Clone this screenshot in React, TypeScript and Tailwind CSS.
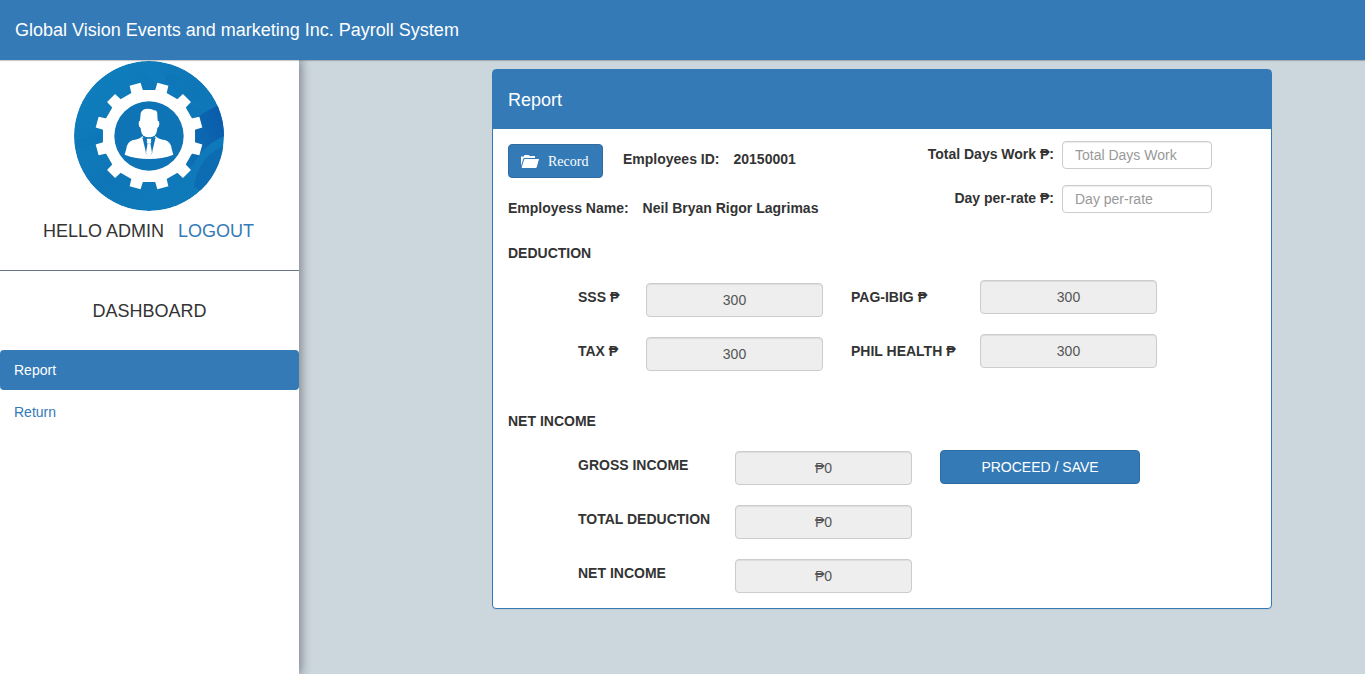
import React from 'react'

const teeth = [15, 45, 75, 105, 135, 165, 195, 225, 255, 285, 315, 345]

const ringPoints = teeth
  .map((deg) => {
    const a = (deg * Math.PI) / 180
    return `${(143 * Math.sin(a)).toFixed(1)},${(-143 * Math.cos(a)).toFixed(1)}`
  })
  .join(' ')

function Avatar() {
  return (
    <svg viewBox="-225 -225 450 450" className="size-[150px]" role="img" aria-label="Admin">
      <defs>
        <linearGradient id="disc" x1="0" y1="0" x2="1" y2="1">
          <stop offset="0" stopColor="#0f80bf" />
          <stop offset="0.5" stopColor="#0e76b7" />
          <stop offset="1" stopColor="#0f7cbb" />
        </linearGradient>
        <linearGradient id="sweep" x1="0" y1="0.7" x2="1" y2="0.3">
          <stop offset="0" stopColor="#0b66b0" stopOpacity="0" />
          <stop offset="1" stopColor="#0b5cab" />
        </linearGradient>
        <clipPath id="round">
          <circle r="225" />
        </clipPath>
      </defs>
      <g clipPath="url(#round)">
        <circle r="225" fill="url(#disc)" />
        <path d="M0 90 Q100 -50 225 -100 V0 Q160 30 130 90 Q60 140 0 90Z" fill="url(#sweep)" />
        <path d="M135 150 Q150 60 225 30 V130 L170 175Z" fill="#0c69b0" opacity="0.8" />
        <path d="M-225 15 Q-60 -20 60 -190 L90 -175 Q-40 0 -225 40Z" fill="#0a6fb4" opacity="0.25" />
        <path d="M20 -225 Q70 -120 160 -90 L170 -80 Q60 -100 -20 -200Z" fill="#2089c8" opacity="0.15" />
      </g>
      <g fill="#fff">
        <polygon points={ringPoints} />
        {teeth.map((deg) => (
          <path key={deg} d="M-18 -130 L-17 -161 H17 L18 -130Z" transform={`rotate(${deg})`} />
        ))}
      </g>
      <circle r="104" fill="#0f74b5" />
      <g fill="#fff">
        <path d="M-25 -68 Q-22 -82 -3 -82 Q10 -82 15 -77 Q26 -78 25 -62 L26 -46 Q31 -46 31 -39 Q31 -27 25 -24 Q24 -8 17 -1 Q0 9 -17 -1 Q-24 -8 -25 -24 Q-31 -27 -31 -39 Q-31 -46 -27 -46Z" />
        <path d="M-20 0 L-10 14 Q0 20 10 14 L20 0 Q24 8 50 13 Q65 18 68 38 L73 56 Q40 69 0 69 Q-40 69 -73 56 L-68 38 Q-65 18 -50 13 Q-24 8 -20 0Z" />
      </g>
      <path d="M-20 4 L-8 54 L-5 26 L-8 10 L0 6 L8 10 L5 26 L8 54 L20 4 L0 10Z" fill="#0f74b5" />
      <path d="M-10 50 L-5 22 H5 L10 50 L0 62Z" fill="#0f74b5" />
      <path d="M-4 22 H4 L9 50 L0 66 L-9 50Z M-7 8 H7 L4 20 H-4Z" fill="#fff" />
    </svg>
  )
}

function FolderOpen() {
  return (
    <svg viewBox="0 0 18 13" className="h-[13px] w-[18px]" fill="currentColor" aria-hidden="true">
      <path d="M0 11 V1.500 H3 V1 Q3 0 4 0 H7.500 Q8.500 0 8.500 1 H14 V3 H3.500 Q2.500 3 2.200 4Z" />
      <path d="M4 4 H18 L15.800 12 Q15.500 13 14.500 13 H1 Q0.600 13 0.800 12 L3 4.800 Q3.200 4 4 4Z" />
    </svg>
  )
}

const inputBase =
  'min-w-0 rounded border border-[#ccc] px-3 text-sm leading-5 shadow-[inset_0_1px_1px_rgba(0,0,0,0.075)] outline-none focus:border-[#66afe9]'

type FieldProps = { id: string; label: string; value: string; labelClass?: string }

function Field({ id, label, value, labelClass = 'mt-1' }: FieldProps) {
  return (
    <>
      <label htmlFor={id} className={`self-start font-bold ${labelClass}`}>
        {label}
      </label>
      <input
        id={id}
        readOnly
        value={value}
        className={`${inputBase} h-[34px] w-full bg-[#eee] text-center text-[#555]`}
      />
    </>
  )
}

function RateField({ id, label }: { id: string; label: string }) {
  return (
    <>
      <label htmlFor={id} className="mt-[3px] self-start text-right font-bold">
        {label}
      </label>
      <input
        id={id}
        placeholder={label.replace(' ₱:', '')}
        className={`${inputBase} h-7 w-full bg-white text-[#555] placeholder:text-[#999]`}
      />
    </>
  )
}

export default function App() {
  return (
    <div className="flex min-h-[calc(100vh-2px)] flex-col overflow-hidden bg-[#ccd6dd] font-['Liberation_Sans',Arial,sans-serif] text-sm leading-5 text-[#333]">
      <header className="z-10 flex h-[60px] items-center bg-[#337ab7] px-[15px] shadow-[0_1px_1px_rgba(0,0,0,0.2)]">
        <h1 className="text-lg leading-5 text-white">
          Global Vision Events and marketing Inc. Payroll System
        </h1>
      </header>
      <div className="flex flex-1">
        <aside className="w-[299px] shrink-0 bg-white shadow-[1px_0_10px_1px_rgba(0,0,0,0.4)]">
          <div className="flex h-[211px] flex-col items-center border-b border-[#657786] pt-px pr-0.5">
            <Avatar />
            <p className="mt-[10px] flex gap-[14px] text-lg leading-5">
              <span>HELLO ADMIN</span>
              <a href="#logout" className="text-[#337ab7]">
                LOGOUT
              </a>
            </p>
          </div>
          <h2 className="pt-[30px] pb-[29px] text-center text-lg leading-5">DASHBOARD</h2>
          <nav className="flex flex-col gap-0.5 text-[#337ab7]">
            <a href="#report" className="rounded bg-[#337ab7] px-[14px] py-[10px] text-white">
              Report
            </a>
            <a href="#return" className="rounded px-[14px] py-[10px]">
              Return
            </a>
          </nav>
        </aside>
        <main className="min-w-0 flex-1 pt-[9px] pr-[93px] pl-[193px]">
          <section className="rounded border border-[#337ab7] bg-white shadow-[0_1px_1px_rgba(0,0,0,0.05)]">
            <h2 className="bg-[#337ab7] px-[15px] pt-5 pb-[19px] text-lg leading-5 text-white">Report</h2>
            <form className="px-[15px] pt-3 pb-[15px]" onSubmit={(e) => e.preventDefault()}>
              <div className="flex justify-between">
                <div className="pt-[3px]">
                  <div className="flex items-start gap-5">
                    <button
                      type="button"
                      className="flex h-[34px] w-[95px] items-center gap-[9px] rounded border border-[#2e6da4] bg-[#337ab7] px-3 font-['Liberation_Serif',serif] text-white"
                    >
                      <FolderOpen />
                      <span className="pt-0.5">Record</span>
                    </button>
                    <p className="flex gap-[14px] pt-[5px] font-bold">
                      <span>Employees ID:</span>
                      <span>20150001</span>
                    </p>
                  </div>
                  <p className="mt-5 flex gap-[14px] font-bold">
                    <span>Employess Name:</span>
                    <span>Neil Bryan Rigor Lagrimas</span>
                  </p>
                </div>
                <div className="mr-11 grid grid-cols-[auto_150px] content-start gap-x-2 gap-y-4">
                  <RateField id="days" label="Total Days Work ₱:" />
                  <RateField id="rate" label="Day per-rate ₱:" />
                </div>
              </div>

              <h3 className="mt-[25px] font-bold">DEDUCTION</h3>
              <div className="mt-[17px] flex gap-7 pl-[70px]">
                <div className="mt-[3px] grid grid-cols-[68px_177px] gap-y-5">
                  <Field id="sss" label="SSS ₱" value="300" />
                  <Field id="tax" label="TAX ₱" value="300" />
                </div>
                <div className="grid grid-cols-[129px_177px] content-start gap-y-5">
                  <Field id="pagibig" label="PAG-IBIG ₱" value="300" labelClass="mt-[7px]" />
                  <Field id="phil" label="PHIL HEALTH ₱" value="300" labelClass="mt-[7px]" />
                </div>
              </div>

              <h3 className="mt-10 font-bold">NET INCOME</h3>
              <div className="mt-[19px] flex items-start gap-7 pl-[70px]">
                <div className="mt-px grid grid-cols-[157px_177px] gap-y-5">
                  <Field id="gross" label="GROSS INCOME" value="₱0" />
                  <Field id="deduction" label="TOTAL DEDUCTION" value="₱0" />
                  <Field id="net" label="NET INCOME" value="₱0" />
                </div>
                <button
                  type="submit"
                  className="h-[34px] w-[200px] rounded border border-[#2e6da4] bg-[#337ab7] text-white"
                >
                  PROCEED / SAVE
                </button>
              </div>
            </form>
          </section>
        </main>
      </div>
    </div>
  )
}
